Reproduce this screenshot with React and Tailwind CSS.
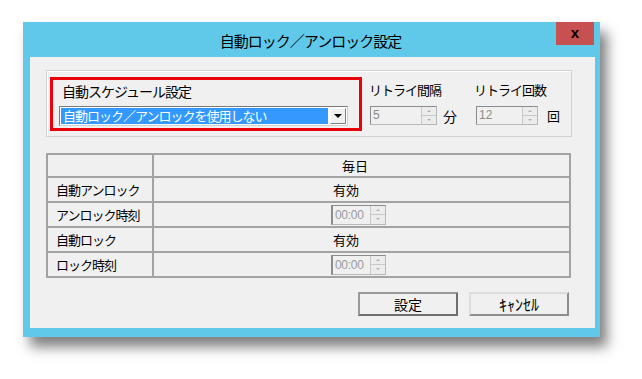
import React from "react";

const SpinButtons = ({ h = "h-full" }) => (
  <div className={`flex flex-col w-[15px] ${h} border-l border-[#c8c8c8]`}>
    <div className="flex-1 bg-[#ececec] border-b border-[#c8c8c8] flex items-center justify-center">
      <span className="block w-0 h-0 border-l-[2px] border-r-[2px] border-b-[2px] border-l-transparent border-r-transparent border-b-[#b0b0b0]"></span>
    </div>
    <div className="flex-1 bg-[#ececec] flex items-center justify-center">
      <span className="block w-0 h-0 border-l-[2px] border-r-[2px] border-t-[2px] border-l-transparent border-r-transparent border-t-[#b0b0b0]"></span>
    </div>
  </div>
);

const Spinner = ({ value, width }) => (
  <div
    className={`flex h-[19px] ${width} border border-[#b8b8b8] border-l-[#8c8c8c] border-t-[#8c8c8c] bg-[#f0f0f0]`}
  >
    <div className="flex-1 pl-[2px] text-[12px] leading-[17px] text-[#8d8d8d] font-['Liberation_Sans',sans-serif]">
      {value}
    </div>
    <SpinButtons />
  </div>
);

const TimeBox = () => (
  <div className="flex h-[20px] w-[55px] border border-[#b8b8b8] border-l-[#8c8c8c] border-l-2 border-t-[#8c8c8c] bg-[#f0f0f0]">
    <div className="flex-1 pl-[2px] text-[12px] leading-[18px] text-[#9a9a9a] font-['Liberation_Sans',sans-serif] tracking-[-0.3px]">
      00:00
    </div>
    <SpinButtons />
  </div>
);

const rows = [
  { label: "自動アンロック", type: "text" },
  { label: "アンロック時刻", type: "time" },
  { label: "自動ロック", type: "text" },
  { label: "ロック時刻", type: "time" },
];

export default function App() {
  return (
    <div className="w-[642px] h-[379px] bg-white pt-[22px] pl-[23px] font-['Noto_Sans_CJK_JP',sans-serif] text-black overflow-hidden">
      <div className="w-[577px] h-[315px] bg-[#60c9ea] flex flex-col pl-[7px] pr-[5px] pb-[9px] shadow-[7px_10px_12px_rgba(0,0,0,0.5)]">
        {/* Title bar */}
        <div className="relative h-[35px] flex items-center justify-center">
          <span className="text-[15px] tracking-[-1px] leading-none pr-[4px] pt-[2px]">
            自動ロック／アンロック設定
          </span>
          <div className="absolute top-0 right-[1px] w-[38px] h-[23px] bg-[#c75050] flex items-center justify-center">
            <span className="font-['Liberation_Sans',sans-serif] font-bold text-[15px] leading-none pb-[2px]">
              x
            </span>
          </div>
        </div>

        {/* Content */}
        <div className="flex-1 bg-[#f0f0f0] pt-[13px] pl-[16px] pr-[23px] flex flex-col">
          {/* Group box */}
          <div className="h-[67px] border border-[#d2d2d2] shadow-[inset_1px_1px_0_#ffffff] flex items-start">
            <div className="ml-[3px] mt-[6px] w-[312px] h-[54px] border-[3px] border-[#e8000b] flex flex-col">
              <div className="pl-[9px] mt-[2px] text-[14px] tracking-[-1px] leading-[18px]">
                自動スケジュール設定
              </div>
              <div className="ml-[6px] mt-[6px] w-[289px] h-[20px] border border-[#7a7a7a] border-r-[#cfcfcf] border-b-[#cfcfcf] bg-white flex p-[1px]">
                <div className="flex-1 bg-[#3399ff] text-white text-[13px] tracking-[-1px] leading-[16px] pl-[2px]">
                  自動ロック／アンロックを使用しない
                </div>
                <div className="w-[16px] ml-[2px] bg-[#f0f0f0] border border-[#fafafa] border-r-[#808080] border-b-[#808080] flex items-center justify-center">
                  <span className="block w-0 h-0 border-l-[4px] border-r-[4px] border-t-[4px] border-l-transparent border-r-transparent border-t-black"></span>
                </div>
              </div>
            </div>

            <div className="ml-[7px] mt-[10px] flex flex-col">
              <div className="text-[13px] tracking-[-1px] leading-[18px]">
                リトライ間隔
              </div>
              <div className="mt-[7px] ml-[1px] flex items-center">
                <Spinner value="5" width="w-[67px]" />
                <span className="ml-[6px] text-[14px] leading-none">分</span>
              </div>
            </div>

            <div className="ml-[17px] mt-[10px] flex flex-col">
              <div className="text-[13px] tracking-[-1px] leading-[18px]">
                リトライ回数
              </div>
              <div className="mt-[7px] ml-[2px] flex items-center">
                <Spinner value="12" width="w-[62px]" />
                <span className="ml-[9px] text-[13px] leading-none">回</span>
              </div>
            </div>
          </div>

          {/* Table */}
          <div className="mt-[16px] w-[525px] border-2 border-[#a3a3a3] flex flex-col">
            <div className="h-[21px] flex">
              <div className="w-[106px] border-r-2 border-[#a3a3a3]"></div>
              <div className="flex-1 pl-[188px] text-[13px] leading-[21px]">毎日</div>
            </div>
            {rows.map((r) => (
              <div key={r.label} className="h-[25px] flex border-t-2 border-[#a3a3a3]">
                <div className="w-[106px] border-r-2 border-[#a3a3a3] pl-[8px] text-[13px] tracking-[-1px] leading-[23px]">
                  {r.label}
                </div>
                <div className="flex-1 pl-[177px] flex items-center">
                  {r.type === "text" ? (
                    <span className="ml-[2px] text-[13px] leading-none">有効</span>
                  ) : (
                    <TimeBox />
                  )}
                </div>
              </div>
            ))}
          </div>

          {/* Buttons */}
          <div className="mt-[14px] flex justify-end gap-[11px] pr-[3px]">
            <button className="w-[100px] h-[24px] bg-[#f0f0f0] border-2 border-[#6e6e6e] border-t-[#9a9a9a] border-l-[#9a9a9a] text-[14px] leading-none">
              設定
            </button>
            <button className="w-[100px] h-[24px] bg-[#f0f0f0] border-2 border-[#dcdcdc] border-r-[#8c8c8c] border-b-[#8c8c8c] text-[16px] leading-none">
              ｷｬﾝｾﾙ
            </button>
          </div>
        </div>
      </div>
    </div>
  );
}
